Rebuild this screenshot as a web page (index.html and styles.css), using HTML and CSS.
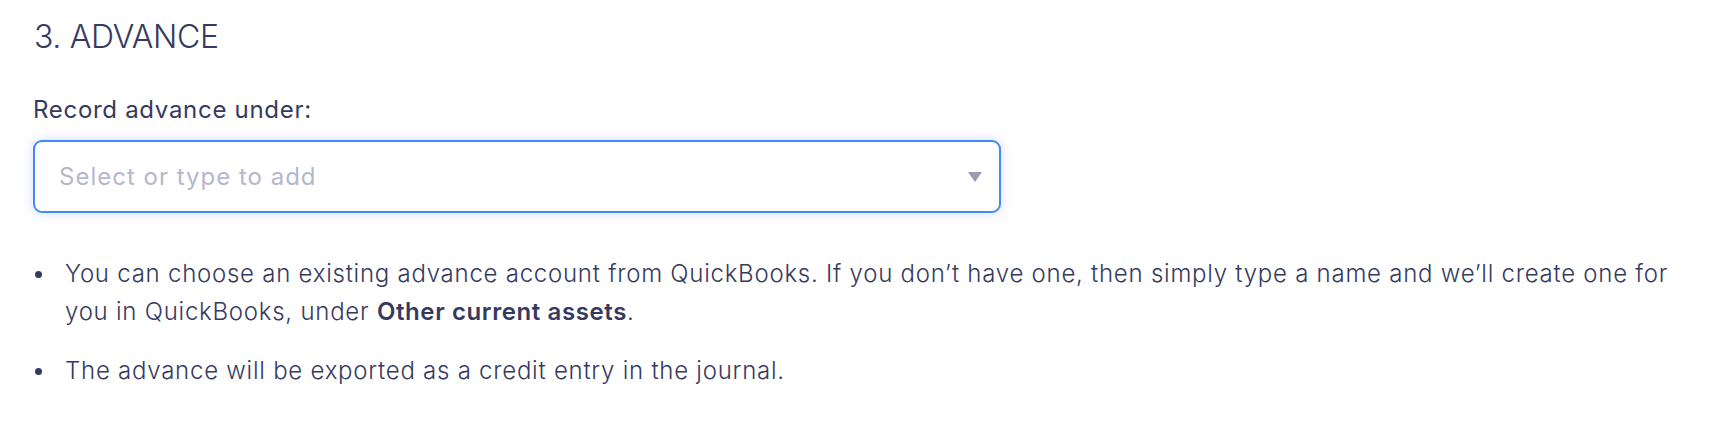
FILE: index.html
```html
<!DOCTYPE html>
<html lang="en">
<head>
  <meta charset="UTF-8" />
  <meta name="viewport" content="width=device-width, initial-scale=1.0"/>
  <title>Advance</title>
  <link rel="stylesheet" href="styles.css">
</head>
<body>

  <section class="advance">
    <h2 class="section-title">3. ADVANCE</h2>

    <label class="field-label" for="advanceAccount">Record advance under:</label>
    <div class="select-box">
      <input id="advanceAccount" class="select-input" type="text" placeholder="Select or type to add">
      <span class="select-caret"></span>
    </div>

    <ul class="notes">
      <li>You can choose an existing advance account from QuickBooks. If you don’t have one, then simply type a name and we’ll create one for you in QuickBooks, under <strong>Other current assets</strong>.</li>
      <li>The advance will be exported as a credit entry in the journal.</li>
    </ul>
  </section>

</body>
</html>
```

FILE: styles.css
```css
body {
  margin: 0;
  font-family: 'Inter', 'Noto Sans', sans-serif;
  background-color: #fff;
  color: #363a5e;
}

.advance {
  padding: 17px 33px 0 33px;
}

.section-title {
  margin: 0;
  font-size: 32px;
  line-height: 40px;
  font-weight: 300;
  letter-spacing: -0.3px;
  padding-left: 1px;
}

.field-label {
  display: block;
  margin-top: 37px;
  margin-bottom: 14px;
  font-size: 24px;
  line-height: 32px;
  font-weight: 400;
  letter-spacing: 0.7px;
}

.select-box {
  position: relative;
  width: 968px;
  height: 73px;
  box-sizing: border-box;
  border: 2px solid #3f8cf7;
  border-radius: 9px;
  box-shadow: 0 0 12px rgba(110, 120, 255, 0.28);
  background: #fff;
}

.select-input {
  width: 100%;
  height: 100%;
  box-sizing: border-box;
  border: none;
  outline: none;
  background: transparent;
  padding: 0 60px 0 24px;
  font-family: inherit;
  font-size: 24px;
  letter-spacing: 1px;
  color: #363a5e;
}

.select-input::placeholder {
  color: #b6b7ca;
}

.select-caret {
  position: absolute;
  right: 17px;
  top: 30px;
  width: 0;
  height: 0;
  border-left: 7.5px solid transparent;
  border-right: 7.5px solid transparent;
  border-top: 10px solid #9b9bb0;
}

.notes {
  list-style: none;
  margin: 42px 0 0 0;
  padding: 0;
  font-size: 24px;
  line-height: 38.4px;
  font-weight: 300;
  letter-spacing: 0.75px;
}

.notes li {
  position: relative;
  padding-left: 32px;
  margin-bottom: 20px;
}

.notes li::before {
  content: "";
  position: absolute;
  left: 2px;
  top: 16px;
  width: 7px;
  height: 7px;
  border-radius: 50%;
  background: #363a5e;
}

.notes strong {
  font-weight: 600;
  letter-spacing: 0.6px;
}
```
